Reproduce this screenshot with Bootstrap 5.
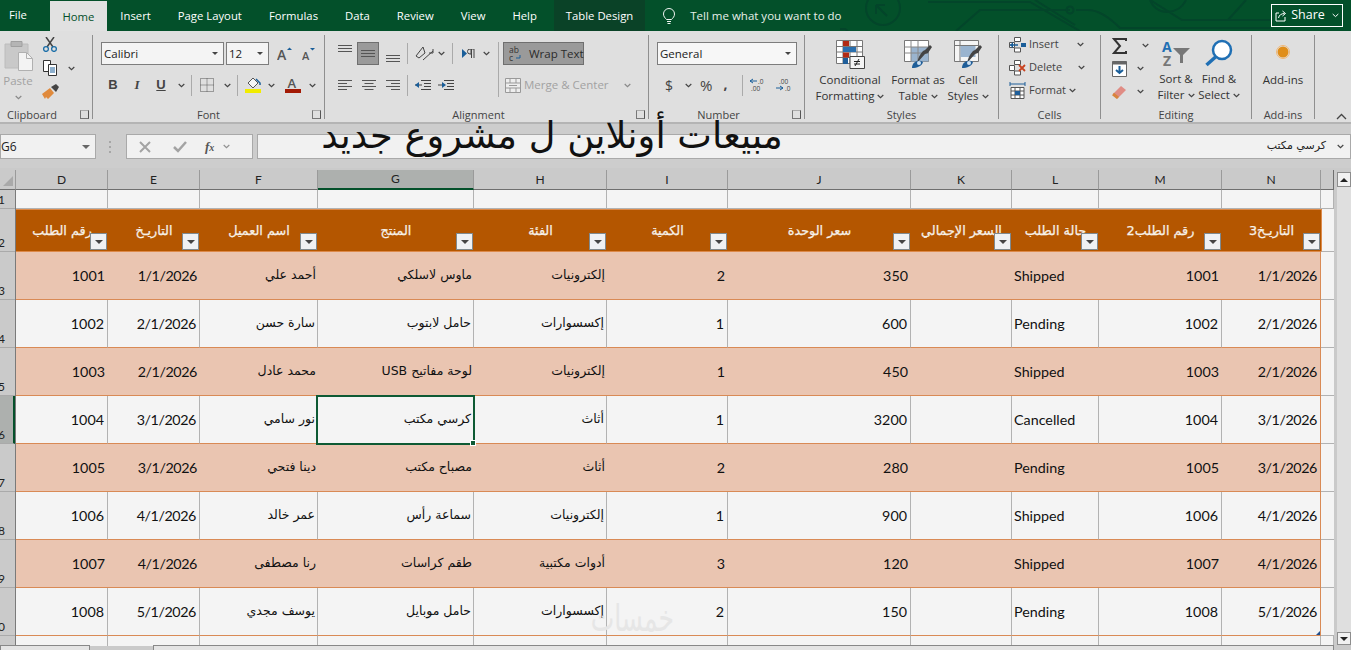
<!doctype html>
<html lang="en"><head><meta charset="utf-8">
<link rel="stylesheet" href="https://cdn.jsdelivr.net/npm/bootstrap@5.3.0/dist/css/bootstrap.min.css">
<style>
html,body{height:650px;overflow:hidden}
body{width:1351px;background:#cacaca;font-family:"Open Sans","DejaVu Sans",sans-serif;font-size:11.5px;color:#333;position:relative}
svg{display:block;flex:none}
.ml1{margin-left:1px}.ml2{margin-left:2px}.ml3{margin-left:3px}.ml4{margin-left:4px}.ml5{margin-left:5px}.ml6{margin-left:6px}.ml7{margin-left:7px}.ml8{margin-left:8px}.ml9{margin-left:9px}.ml10{margin-left:10px}.ml11{margin-left:11px}.ml12{margin-left:12px}.ml13{margin-left:13px}.ml14{margin-left:14px}.ml15{margin-left:15px}.ml16{margin-left:16px}.ml18{margin-left:18px}.ml22{margin-left:22px}.ml51{margin-left:51px}
.xtabs{height:31px;background:#03502a;color:#fff;position:relative;overflow:hidden;font-size:11.3px}
.xtab{display:flex;align-items:center;padding:2px 13.5px 0;height:31px}
.xtab.t-file{padding:0 23px 0 9px}
.xtab.on{background:#e1e1e1;color:#03502a;margin-top:1px;height:30px;padding:2px 12.5px 0}
.xtab.t-help{padding-right:17px}
.xtab.tdesign{background:#0a4227;padding:2px 12px 0}
.tellme{margin-left:17px;gap:14px;padding:0;color:#e6efe9;font-size:11.5px}
.circuit{position:absolute;left:840px;top:0}
.sharebtn{position:absolute;left:1271px;top:4px;width:72px;height:23px;border:1px solid #fff;gap:4px;font-size:12.5px}
.rib{height:93px;background:#dfdfdf;border-bottom:2px solid #b4b4b4;color:#444;padding-top:4px}
.grp{height:84px;border-right:1px solid #8f8f8f;position:relative;flex:none;display:flex;flex-direction:column}
.g-clip{width:93px}.g-font{width:232px}.g-align{width:324px}.g-num{width:156px}.g-styles{width:194px}.g-cells{width:102px}.g-edit{width:151px}.g-add{width:63px}
.grpbody{flex:1;display:flex;min-height:0}
.grpcol{flex:1;display:flex;flex-direction:column;min-height:0;padding:7px 0 0 8px}
.col-align{padding-left:12px}
.col-cells{padding:0 0 0 10px;margin-top:-2px;font-size:11px}
.grplab{height:12px;flex:none;line-height:15px;text-align:center;font-size:11px;color:#444;white-space:nowrap}
.lab-clip{text-align:left;padding-left:7px}
.lab-align{padding-right:16px}
.lab-num{padding-right:16px}
.launch{position:absolute;right:3px;bottom:0;width:9px;height:9px;border:1px solid #777;border-top-color:#aaa;border-right-color:#555}
.inp{background:#f4f4f4;border:1px solid #7d7d7d;height:23px;display:flex;align-items:center;padding-left:2px;color:#222;font-size:11.5px;flex:none}
.w-cal{width:123px}.w-size{width:43px;margin-left:2px}.w-gen{width:140px;background:#f7f7f7}
.caret{width:0;height:0;border-left:3px solid transparent;border-right:3px solid transparent;border-top:3px solid #444;margin-left:auto;margin-right:5px}
.chev{width:7px;height:7px;flex:none}
.chev.dim{opacity:.55}
.bigbtn{display:flex;flex-direction:column;align-items:center;line-height:16px;text-align:center;color:#333;white-space:nowrap;padding-top:4px}
.bigbtn .ic{margin-bottom:3px}
.bb-paste{width:36px;padding-top:5px;color:#a2a2a2}
.bb-paste .ic{margin-bottom:2px}
.bb-paste .chev{margin-top:5px}
.clipcol{width:20px;padding-top:2px;gap:8px;margin-left:4px}
.clipchev{margin:30px 0 0 8px}
.bb-cond{width:90px}.bb-fmt{width:46px}.bb-cell{width:54px}
.bb-sort{width:44px}.bb-find{width:42px}
.bb-add{padding-top:10px;flex:1}
.bb-add .ic{margin-bottom:13px}
.rowi{display:flex;align-items:center;height:23px;flex:none}
.rowi.two{margin-top:8px;height:24px}
.rowi.cr{height:23px}
.r-num{padding-left:8px}
.dimt{color:#a2a2a2}
.vsp{width:1px;height:21px;background:#aaa;flex:none}
.vsp.tall{height:55px;align-self:flex-start}
.on-box{display:flex;align-items:center;justify-content:center;height:23px;background:#9a9a9a;border:1px solid #6f6f6f;flex:none}
.al-mid{width:22px;margin-left:4px}
.al-top{margin-bottom:9px}.al-bot{margin:10px 0 0 6px}
.wraptxt{width:81px;gap:6px;padding-left:5px;justify-content:flex-start;color:#2b2b2b;white-space:nowrap}
.mrg{font-size:11.5px;white-space:nowrap}
.bi{width:24px;text-align:center;font-size:13px;font-family:"Liberation Sans",sans-serif;font-weight:700;flex:none}
.bi.it{font-family:"Liberation Serif",serif;font-style:italic}
.dollar{font-size:14px;width:12px}
.pct{font-size:15px}
.cma{font-size:14px;margin-top:-3px;font-weight:700}
.edcol{padding:0 0 0 11px;width:53px;margin-top:-1px}
.fbar{height:44px;background:#cdcdcd;padding-top:10px;position:relative}
.fbox{height:25px;background:#f1f1f1;border:1px solid #a9a9a9}
.f-name{width:96px;font-size:12px;color:#222}
.f-name .caret{border-top:4px solid #666;border-left-width:4px;border-right-width:4px}
.f-dots{margin:6px 14px 0 12px}
.f-btns{width:127px;padding-left:12px}
.f-fx{font-family:"Liberation Serif",serif;font-size:13px;font-weight:700;color:#555}
.f-fx span{font-size:10px}
.f-val{margin-left:4px;font-family:"DejaVu Sans",sans-serif;color:#222;padding-right:6px;font-size:11px}
.bigtitle{position:absolute;left:292px;top:116px;width:520px;font-family:"DejaVu Sans",sans-serif;font-size:36.800px;line-height:40px;color:#111;direction:rtl;white-space:nowrap;text-align:center}
.gridarea{height:482px}
.gridleft{width:1334px;flex:none;position:relative}
.hdrs{height:22px;display:flex;font-family:"Lato",sans-serif;font-size:12px;color:#222;padding-top:2px}
.corner{width:16px;flex:none;border-right:1px solid #9a9a9a;border-bottom:1px solid #6f6f6f;position:relative}
.corner svg{position:absolute;left:2px;bottom:2px}
.hc{border-right:1px solid #9a9a9a;border-bottom:1px solid #6f6f6f;display:flex;align-items:center;justify-content:center;flex:none}
.hc.sel{background:#adb0ae;border-bottom:2px solid #03502a}
.hc-rest{flex:1;border-bottom:1px solid #6f6f6f;border-right:1px solid #6f6f6f}
.sheetwrap{display:flex;height:460px;position:relative}
.rnums{width:16px;flex:none;font-family:"Lato",sans-serif;font-size:12px;color:#222;border-right:1px solid #7a7a7a}
.rn{display:flex;align-items:flex-end;overflow:hidden;line-height:15px;padding-bottom:1px;border-bottom:1px solid #aaa}
.rn span{margin-left:-2px}
.rn.sel{background:#adb0ae;border-right:2px solid #03502a}
.xsheet{table-layout:fixed;border-collapse:separate;border-spacing:0;width:1318px;font-family:"Lato","DejaVu Sans",sans-serif;font-size:14.3px;color:#111;background:#f4f4f4}
.xsheet td{border-right:1px solid #b2b2b2;border-bottom:1px solid #b2b2b2;padding:0 3px 0 2px;text-align:right;white-space:nowrap;overflow:hidden;vertical-align:middle}
.xsheet td.lft{text-align:left}
.xsheet td.dt{letter-spacing:-.42px}
.r1 td{height:19px}
.xsheet .r2 td{height:43px;background:#b45600;color:#f7f1e8;font-family:"DejaVu Sans",sans-serif;font-size:12.800px;text-align:center;border-right:0;border-bottom:1px solid #dd8a4a;position:relative;border-top:1px solid #dd8a4a;padding:0;overflow:visible;-webkit-text-stroke:.25px #f7f1e8}
.xsheet .r2 td.fill{background:#f4f4f4;border:0;border-left:1px solid #dd8a4a;border-bottom:1px solid #b2b2b2}
.rd td{height:48px}
.xsheet .rd td{border-bottom:1px solid #d98a55}
.xsheet .rd.alt td{background:#eac5b1;border-right:0}
.xsheet .rd td.last{border-right:1px solid #d98a55}
.xsheet .rd td.fill,.xsheet .rd.alt td.fill{background:#f4f4f4;border-right:0;border-bottom:1px solid #b2b2b2}
.xsheet td.arab{font-size:12.5px;font-family:"DejaVu Sans",sans-serif;padding-right:2px}
.xsheet .tail td{height:10px;border-bottom:0}
.fbtn{position:absolute;right:1px;bottom:1px;width:17px;height:17px;background:#eff1f3;border:1px solid #7f8a90;display:flex;align-items:center;justify-content:center}
.fbtn i{display:block;width:0;height:0;border-left:4px solid transparent;border-right:4px solid transparent;border-top:4px solid #444}
.selcell{position:absolute;left:316px;top:205px;width:159px;height:50px;border:2px solid #0e5a34}
.selcell i{position:absolute;right:-3px;bottom:-3px;width:6px;height:6px;background:#0e5a34;border:1px solid #fff}
.tblgrip{position:absolute;left:1316px;top:441px;width:0;height:0;border-left:4px solid transparent;border-bottom:4px solid #1f4e8c}
.vscroll{width:14px;margin:4px 0 0 3px;height:473px;background:#dfdfdf;flex:none;display:flex;flex-direction:column;justify-content:space-between}
.vs1{background:#f1f1f1;border:1px solid #8d8d8d;height:15px}
.vs1.dn{height:13px}
.uptri{width:0;height:0;border-left:4px solid transparent;border-right:4px solid transparent;border-bottom:4px solid #222}
.dntri{width:0;height:0;border-left:4px solid transparent;border-right:4px solid transparent;border-top:4px solid #222}
.hbar{position:absolute;bottom:0;height:5px;background:#e4e4e4;border:1px solid #888;border-bottom:0}
.hb1{left:0;width:90px}.hb2{left:153px;width:1181px}
.wmark{position:absolute;left:594px;top:599px;width:80px;height:40px;font-family:"DejaVu Sans",sans-serif;font-size:25px;line-height:40px;color:#e6e6e6;direction:rtl;text-align:center;transform:scaleY(1.5)}
</style></head><body>

<svg width="0" height="0" class="position-absolute"><defs>
<symbol id="chv" viewBox="0 0 7 7"><path d="M.7 2l2.800 2.600L6.300 2" fill="none" stroke="#444" stroke-width="1.200"/></symbol>
<symbol id="lines" viewBox="0 0 16 8"><path d="M1 .5h14M1 3.500h14M1 6.500h14" stroke="#555"/></symbol>
<symbol id="brush" viewBox="0 0 30 30"><path d="M14 24l8-9 3-1 4-6-2-2-5 5-2 1c-3 3-5 7-6 12z" fill="#444"/><path d="M9 29c0-5 4-8 9-7l2 1c-1 4-6 6-11 6z" fill="#1f5e99"/><circle cx="16" cy="24" r="2" fill="#cfe0f0"/></symbol>
</defs></svg>

<div class="xtabs d-flex">
  <div class="xtab t-file">File</div>
  <div class="xtab on">Home</div>
  <div class="xtab">Insert</div>
  <div class="xtab">Page Layout</div>
  <div class="xtab">Formulas</div>
  <div class="xtab">Data</div>
  <div class="xtab">Review</div>
  <div class="xtab">View</div>
  <div class="xtab t-help">Help</div>
  <div class="xtab tdesign">Table Design</div>
  <div class="xtab tellme">
    <svg width="14" height="18" viewBox="0 0 14 18"><path d="M4.500 12.500C3 10.800 1.500 9.600 1.500 7a5.500 5.500 0 0 1 11 0c0 2.600-1.500 3.800-3 5.500zM5 14.500h4M5.500 16.500h3" fill="none" stroke="#f0f5f2"/></svg>
    <span>Tell me what you want to do</span>
  </div>
  <svg class="circuit" width="430" height="31" viewBox="0 0 430 31"><g fill="none" stroke="#03452a" stroke-width="2"><circle cx="43" cy="8" r="17"/><path d="M36 5l11 11M36 5h9M36 5v9M88 2h102l50 29M116 31l24-21h90M236 10h12c10 0 20 6 32 18h150M195 0l40 25M310 0c6 16 28 16 36 0M310 0l32 20h98M388 20l18-20M-5 29h10l3 2"/><circle cx="230" cy="10" r="3.500"/></g></svg>
  <div class="sharebtn d-flex align-items-center justify-content-center">
    <svg width="12" height="12" viewBox="0 0 12 12"><path d="M4 3H1v8h9V7M3.500 8c.5-3 3-4.500 6-4.500M7.500 1l3 2.500-3 2.500" fill="none" stroke="#fff"/></svg>
    <span>Share</span>
    <svg class="chev ml3" viewBox="0 0 7 7"><path d="M.7 2l2.800 2.600L6.300 2" fill="none" stroke="#fff"/></svg>
  </div>
</div>

<div class="rib d-flex">
  <div class="grp g-clip">
    <div class="grpbody">
      <div class="bigbtn bb-paste">
        <svg class="ic" width="29" height="31" viewBox="0 0 29 31"><path d="M1 4h23v24H1z" fill="#c9c9c9" stroke="#bcbcbc"/><path d="M7 1.500h11v5H7z" fill="#b5b5b5" stroke="#a0a0a0"/><path d="M14.500 12.500h8l6 6v12h-14z" fill="#f3f3f3" stroke="#b0b0b0"/><path d="M22.500 12.500v6h6" fill="none" stroke="#b0b0b0"/></svg>
        <span>Paste</span>
        <svg class="chev dim"><use href="#chv"/></svg>
      </div>
      <div class="d-flex flex-column align-items-center clipcol">
        <svg width="16" height="15" viewBox="0 0 16 15"><path d="M4 0l7 10M12 0L5 10" stroke="#444" stroke-width="1.500"/><circle cx="4" cy="12" r="2.400" fill="none" stroke="#1a6ea8" stroke-width="1.300"/><circle cx="12" cy="12" r="2.400" fill="none" stroke="#1a6ea8" stroke-width="1.300"/></svg>
        <svg width="16" height="16" viewBox="0 0 16 16"><path d="M1.500.5h7v11h-7z" fill="#fff" stroke="#333"/><path d="M6.500 4.500h8v11h-8z" fill="#fff" stroke="#333"/><path d="M8 8h5M8 10h5M8 12h5" stroke="#1a5e99"/></svg>
        <svg width="17" height="16" viewBox="0 0 17 16"><path d="M0 10l8-6 4 5-6 6-2-2-1 2z" fill="#e08a3c"/><path d="M9 3l5-3 3 3-3 5z" fill="#444"/></svg>
      </div>
      <svg class="chev clipchev"><use href="#chv"/></svg>
    </div>
    <div class="grplab lab-clip">Clipboard</div><i class="launch"></i>
  </div>

  <div class="grp g-font">
    <div class="grpcol">
      <div class="rowi">
        <div class="inp w-cal">Calibri<i class="caret"></i></div>
        <div class="inp w-size">12<i class="caret"></i></div>
        <svg class="ml8" width="16" height="14" viewBox="0 0 16 14"><text x="0" y="13" font-family="Open Sans" font-size="14" font-weight="600" fill="#555">A</text><path d="M10 3l2.500-2.500L15 3z" fill="#1a5e99"/></svg>
        <svg class="ml9" width="14" height="14" viewBox="0 0 14 14"><text x="0" y="13" font-family="Open Sans" font-size="11" font-weight="600" fill="#555">A</text><path d="M8 1l2.500 2.500L13 1z" fill="#1a5e99"/></svg>
      </div>
      <div class="rowi two">
        <b class="bi">B</b><span class="bi it">I</span><u class="bi">U</u>
        <svg class="chev ml5"><use href="#chv"/></svg>
        <div class="vsp ml6"></div>
        <svg class="ml8" width="15" height="15" viewBox="0 0 15 15"><path d="M.5.500h13v13H.5zM7 .5v13M.5 7h13" fill="none" stroke="#555" stroke-dasharray="1 1"/></svg>
        <svg class="chev ml9"><use href="#chv"/></svg>
        <div class="vsp ml6"></div>
        <svg class="ml7" width="17" height="16" viewBox="0 0 17 16"><path d="M3 6l5-5 5 5-5 5z" fill="#f5f5f5" stroke="#555"/><path d="M11 2l4 4v2" fill="none" stroke="#1a5e99" stroke-width="1.500"/><path d="M0 12h16v4H0z" fill="#f1ec00"/></svg>
        <svg class="chev ml6"><use href="#chv"/></svg>
        <svg class="ml10" width="17" height="16" viewBox="0 0 17 16"><text x="2.500" y="11" font-family="Open Sans" font-size="13" font-weight="600" fill="#555">A</text><path d="M0 12h16v4H0z" fill="#a31a05"/></svg>
        <svg class="chev ml7"><use href="#chv"/></svg>
      </div>
    </div>
    <div class="grplab">Font</div><i class="launch"></i>
  </div>

  <div class="grp g-align">
    <div class="grpcol col-align">
      <div class="rowi">
        <svg class="al-top" width="16" height="8"><use href="#lines"/></svg>
        <div class="on-box al-mid"><svg width="16" height="8"><use href="#lines"/></svg></div>
        <svg class="al-bot" width="16" height="8"><use href="#lines"/></svg>
        <div class="vsp ml6"></div>
        <svg class="ml7" width="20" height="16" viewBox="0 0 20 16"><path d="M1 10L8 1l2 6-6 5zM8 14L18 5" fill="none" stroke="#444"/><path d="M18 3v4h-4" fill="none" stroke="#444"/></svg>
        <svg class="chev ml3"><use href="#chv"/></svg>
        <div class="vsp ml7"></div>
        <svg class="ml9" width="13" height="9" viewBox="0 0 13 9"><path d="M0 0l5 4.500L0 9z" fill="#1a5e99"/><path d="M12 0H8a2.500 2.500 0 0 0 0 5h1V0M9.500 9V0M12 9V0" fill="none" stroke="#444"/></svg>
        <svg class="chev ml8"><use href="#chv"/></svg>
        <div class="vsp tall ml8"></div>
        <div class="on-box wraptxt ml4">
          <svg width="14" height="16" viewBox="0 0 14 16"><text x="0" y="7" font-family="Open Sans" font-size="8.500" fill="#333">ab</text><text x="0" y="15" font-family="Open Sans" font-size="8.500" fill="#333">c</text><path d="M11 9v3H7" fill="none" stroke="#1a5e99"/></svg>
          <span>Wrap Text</span>
        </div>
      </div>
      <div class="rowi two">
        <svg width="16" height="11"><path d="M1 .5h14M1 3.500h9M1 6.500h14M1 9.500h9" stroke="#555"/></svg>
        <svg class="ml8" width="16" height="11"><path d="M1 .5h14M3.500 3.500h9M1 6.500h14M3.500 9.500h9" stroke="#555"/></svg>
        <svg class="ml8" width="16" height="11"><path d="M1 .5h14M6 3.500h9M1 6.500h14M6 9.500h9" stroke="#555"/></svg>
        <div class="vsp ml6"></div>
        <svg class="ml7" width="16" height="12" viewBox="0 0 16 12"><path d="M6 1.500h10M9 4.500h7M9 7.500h7M6 10.500h10M0 6h7" stroke="#444"/><path d="M0 6l4-3v6z" fill="#1a5e99"/></svg>
        <svg class="ml7" width="16" height="12" viewBox="0 0 16 12"><path d="M6 1.500h10M9 4.500h7M9 7.500h7M6 10.500h10M0 6h5" stroke="#444"/><path d="M8 6L4 3v6z" fill="#1a5e99"/></svg>
        <svg class="ml51" width="16" height="15" viewBox="0 0 16 15"><path d="M.5.500h15v14H.5zM.5 5h15M.5 10h15M5 .5V5M11 .5V5M5 10v4.500M11 10v4.500M4 7.500h8" fill="#eee" stroke="#999"/></svg>
        <span class="dimt mrg ml3">Merge &amp; Center</span>
        <svg class="chev dim ml15"><use href="#chv"/></svg>
      </div>
    </div>
    <div class="grplab lab-align">Alignment</div><i class="launch"></i>
  </div>

  <div class="grp g-num">
    <div class="grpcol">
      <div class="inp w-gen">General<i class="caret"></i></div>
      <div class="rowi two r-num">
        <span class="dollar">$</span>
        <svg class="chev ml8"><use href="#chv"/></svg>
        <span class="pct ml8">%</span>
        <span class="cma ml11">,</span>
        <div class="vsp ml15"></div>
        <svg class="ml7" width="16" height="14" viewBox="0 0 16 14"><text x="8" y="6" font-family="Open Sans" font-size="6.500" fill="#444">.0</text><text x="1" y="13" font-family="Open Sans" font-size="6.500" fill="#444">.00</text><path d="M0 3h7M0 3l3-2M0 3l3 2" fill="none" stroke="#1a5e99"/></svg>
        <svg class="ml10" width="16" height="14" viewBox="0 0 16 14"><text x="3" y="6" font-family="Open Sans" font-size="6.500" fill="#444">.00</text><text x="9" y="13" font-family="Open Sans" font-size="6.500" fill="#444">.0</text><path d="M0 10h7M7 10l-3-2M7 10l-3 2" fill="none" stroke="#1a5e99"/></svg>
      </div>
    </div>
    <div class="grplab lab-num">Number</div><i class="launch"></i>
  </div>

  <div class="grp g-styles">
    <div class="grpbody">
      <div class="bigbtn bb-cond">
        <svg class="ic" width="30" height="30" viewBox="0 0 30 30"><path d="M1.500 1.500h26v23h-26zM1.500 7.500h26M1.500 13h26M1.500 18.500h26M8 1.500v23M15 1.500v23M22 1.500v23" fill="#fff" stroke="#777"/><path d="M8 2h6v5H8zM8 13.500h6v5H8z" fill="#b12a14"/><path d="M8 8h13v5H8z" fill="#2a6fae"/><path d="M8 19h5v6H8z" fill="#1f5e99"/><path d="M15 17.500h14.500v12H15z" fill="#f5f5f5" stroke="#444"/><path d="M19 22.500h6M19 25h6M24 20l-4 7" stroke="#222"/></svg>
        <span>Conditional</span><span>Formatting <svg class="chev d-inline"><use href="#chv"/></svg></span>
      </div>
      <div class="bigbtn bb-fmt">
        <svg class="ic" width="30" height="30" viewBox="0 0 30 30"><path d="M1.500 1.500h24v21h-24z" fill="#fff" stroke="#777"/><path d="M8 8h17.500v14.500H8z" fill="#9ab4cf"/><path d="M1.500 8h24M1.500 14h24M8 1.500v21M15 1.500v21" fill="none" stroke="#888"/><use href="#brush" width="30" height="30"/></svg>
        <span>Format as</span><span>Table <svg class="chev d-inline"><use href="#chv"/></svg></span>
      </div>
      <div class="bigbtn bb-cell">
        <svg class="ic" width="30" height="30" viewBox="0 0 30 30"><path d="M1.500 1.500h24v21h-24zM1.500 6.500h24M7 1.500v21" fill="#f5f5f5" stroke="#777"/><path d="M7.500 7h15v11h-15z" fill="#9ab4cf"/><use href="#brush" width="30" height="30"/></svg>
        <span>Cell</span><span>Styles <svg class="chev d-inline"><use href="#chv"/></svg></span>
      </div>
    </div>
    <div class="grplab">Styles</div>
  </div>

  <div class="grp g-cells">
    <div class="grpcol col-cells">
      <div class="rowi cr"><svg width="18" height="16" viewBox="0 0 18 16"><path d="M.5 5.500h5v5h-5zM5.500.5h6v4h-6zM5.500 11h6v4h-6z" fill="#fff" stroke="#555"/><path d="M1 8h8" stroke="#1a5e99" stroke-width="1.500"/><path d="M1 8l3-3v6zM12 6h5v4h-5z" fill="#1a5e99"/></svg><span class="ml2">Insert</span><svg class="chev ml18"><use href="#chv"/></svg></div>
      <div class="rowi cr"><svg width="18" height="16" viewBox="0 0 18 16"><path d="M.5 5.500h5v5h-5zM5.500.5h6v4h-6zM5.500 11h6v4h-6z" fill="#fff" stroke="#555"/><path d="M10 5l6 6M16 5l-6 6" stroke="#c8421f" stroke-width="1.800"/></svg><span class="ml2">Delete</span><svg class="chev ml16"><use href="#chv"/></svg></div>
      <div class="rowi cr"><svg width="18" height="18" viewBox="0 0 18 18"><path d="M2 5.500h13v11H2zM2 9h13M2 13h13M6 5.500v11M11 5.500v11" fill="#fff" stroke="#555"/><path d="M6 9h5v4H6z" fill="#1f5e99"/><path d="M1 2h15M1 0v4M16 0v4" stroke="#1f5e99"/></svg><span class="ml2">Format</span><svg class="chev ml3"><use href="#chv"/></svg></div>
    </div>
    <div class="grplab">Cells</div>
  </div>

  <div class="grp g-edit">
    <div class="grpbody">
      <div class="d-flex flex-column edcol">
        <div class="rowi"><svg width="16" height="16" viewBox="0 0 16 16"><path d="M14 3V1H2l6 7-6 7h12v-2" fill="none" stroke="#333" stroke-width="2"/></svg><svg class="chev ml14"><use href="#chv"/></svg></div>
        <div class="rowi"><svg width="15" height="16" viewBox="0 0 15 16"><path d="M.5.500h14v15H.5z" fill="#fff" stroke="#666"/><path d="M.5.500h14v3H.5z" fill="#666"/><path d="M7.500 5v7M4 9l3.500 3L11 9" fill="none" stroke="#1a5e99" stroke-width="2"/></svg><svg class="chev ml10"><use href="#chv"/></svg></div>
        <div class="rowi"><svg width="15" height="14" viewBox="0 0 15 14"><path d="M1 9l8-8 5 4-8 8z" fill="#e08c84"/><path d="M1 9l5 4" stroke="#d8843d" stroke-width="3"/></svg><svg class="chev ml10"><use href="#chv"/></svg></div>
      </div>
      <div class="bigbtn bb-sort">
        <svg class="ic" width="30" height="29" viewBox="0 0 30 29"><text x="1" y="13" font-family="Open Sans" font-size="14" font-weight="700" fill="#1f6fb4">A</text><text x="2" y="27" font-family="Open Sans" font-size="14" font-weight="700" fill="#777">Z</text><path d="M12 9h17l-7 7v8h-3v-8z" fill="#777"/></svg>
        <span>Sort &amp;</span><span>Filter <svg class="chev d-inline"><use href="#chv"/></svg></span>
      </div>
      <div class="bigbtn bb-find">
        <svg class="ic" width="30" height="29" viewBox="0 0 30 29"><circle cx="18" cy="11" r="9" fill="#fff" stroke="#1f6fb4" stroke-width="2.500"/><path d="M11.500 18l-9 8" stroke="#1f6fb4" stroke-width="3.500"/></svg>
        <span>Find &amp;</span><span>Select <svg class="chev d-inline"><use href="#chv"/></svg></span>
      </div>
    </div>
    <div class="grplab">Editing</div>
  </div>

  <div class="grp g-add">
    <div class="bigbtn bb-add">
      <svg class="ic" width="14" height="14" viewBox="0 0 14 14"><circle cx="7" cy="7" r="5.500" fill="#e08e1a"/><circle cx="7" cy="7" r="6.500" fill="none" stroke="#f1b877"/></svg>
      <span>Add-ins</span>
    </div>
    <div class="grplab">Add-ins</div>
  </div>
  <svg class="position-absolute" style="left:1336px;top:113px" width="11" height="7"><path d="M1 6l4.500-4.500L10 6" fill="none" stroke="#444" stroke-width="1.300"/></svg>
</div>

<div class="fbar d-flex">
  <div class="fbox f-name d-flex align-items-center">G6<i class="caret"></i></div>
  <svg class="f-dots" width="4" height="14"><circle cx="2" cy="2" r="1" fill="#999"/><circle cx="2" cy="7" r="1" fill="#999"/><circle cx="2" cy="12" r="1" fill="#999"/></svg>
  <div class="fbox f-btns d-flex align-items-center">
    <svg width="12" height="12"><path d="M1 1l10 10M11 1L1 11" stroke="#a3a3a3" stroke-width="2"/></svg>
    <svg class="ml22" width="14" height="12"><path d="M1 6l4 4 8-9" fill="none" stroke="#a3a3a3" stroke-width="2.500"/></svg>
    <i class="f-fx ml18">f<span>x</span></i>
    <svg class="chev ml9 dim"><use href="#chv"/></svg>
  </div>
  <div class="fbox f-val flex-grow-1 d-flex align-items-center justify-content-end">
    <span dir="rtl">كرسي مكتب</span>
    <svg class="chev ml11"><use href="#chv"/></svg>
  </div>
</div>
<div class="bigtitle">مبيعات أونلاين ل مشروع جديد</div>

<div class="gridarea d-flex">
  <div class="gridleft">
    <div class="hdrs" id="hd"></div>
    <div class="sheetwrap">
      <div class="rnums" id="rn"></div>
      <div class="flex-grow-1 overflow-hidden" id="sh"></div>
      <div class="selcell"><i></i></div>
      <div class="tblgrip"></div>
    </div>
  </div>
  <div class="vscroll">
    <div class="vs1 d-flex align-items-center justify-content-center"><i class="uptri"></i></div>
    <div class="vs1 dn d-flex align-items-center justify-content-center"><i class="dntri"></i></div>
  </div>
</div>
<div class="hbar hb1"></div>
<div class="hbar hb2"></div>
<div class="wmark">خمسات</div>

<script>
const L=['D','E','F','G','H','I','J','K','L','M','N'];
const W=[92,92,118,156,133,121,183,101,87,123,99];
const H=['رقم الطلب','التاريـخ','اسم العميل','المنتج','الفئة','الكمية','سعر الوحدة','السعر الإجمالي','حالة الطلب','رقم الطلب2','التاريـخ3'];
const D=[['1001','1/1/2026','أحمد علي','ماوس لاسلكي','إلكترونيات','2','350','Shipped'],
['1002','2/1/2026','سارة حسن','حامل لابتوب','إكسسوارات','1','600','Pending'],
['1003','2/1/2026','محمد عادل','لوحة مفاتيح USB','إلكترونيات','1','450','Shipped'],
['1004','3/1/2026','نور سامي','كرسي مكتب','أثاث','1','3200','Cancelled'],
['1005','3/1/2026','دينا فتحي','مصباح مكتب','أثاث','2','280','Pending'],
['1006','4/1/2026','عمر خالد','سماعة رأس','إلكترونيات','1','900','Shipped'],
['1007','4/1/2026','رنا مصطفى','طقم كراسات','أدوات مكتبية','3','120','Shipped'],
['1008','5/1/2026','يوسف مجدي','حامل موبايل','إكسسوارات','2','150','Pending']];
document.getElementById('hd').innerHTML='<div class="corner"><svg width="12" height="12"><path d="M11 1v10H1z" fill="#a9a9a9"/></svg></div>'+L.map((l,i)=>`<div class="hc${l=='G'?' sel':''}" style="width:${W[i]}px">${l}</div>`).join('')+'<div class="hc-rest"></div>';
const RH=[19,43,48,48,48,48,48,48,48,48];
document.getElementById('rn').innerHTML=RH.map((h,i)=>{const n=String(i+1);return `<div class="rn${i==5?' sel':''}" style="height:${h}px"><span>${n.slice(-1)}</span></div>`}).join('');
const F=[...W,13];
let h='<table class="xsheet"><colgroup>'+F.map(w=>`<col style="width:${w}px">`).join('')+'</colgroup>';
h+='<tr class="r1">'+F.map(()=>'<td></td>').join('')+'</tr>';
h+='<tr class="r2">'+H.map(t=>`<td><span dir="rtl">${t}</span><span class="fbtn"><i></i></span></td>`).join('')+'<td class="fill"></td></tr>';
D.forEach((r,i)=>{
 const c=(t,k='')=>`<td class="${k}">${t}</td>`;
 h+=`<tr class="rd ${i%2?'':'alt'}">`+c(r[0])+c(r[1],'dt')+c(`<span dir="rtl">${r[2]}</span>`,'arab')+c(`<span dir="rtl">${r[3]}</span>`,'arab')+c(`<span dir="rtl">${r[4]}</span>`,'arab')+c(r[5])+c(r[6])+c('')+c(r[7],'lft')+c(r[0])+c(r[1],'dt last')+'<td class="fill"></td></tr>';
});
h+='<tr class="tail">'+F.map(()=>'<td></td>').join('')+'</tr></table>';
document.getElementById('sh').innerHTML=h;
</script>
</body></html>
